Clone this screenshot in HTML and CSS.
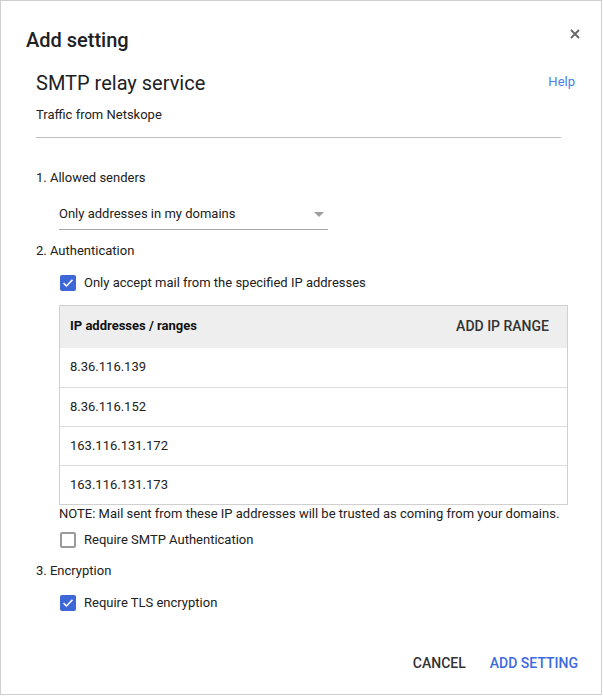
FILE: index.html
```html
<!DOCTYPE html>
<html>
<head>
<meta charset="utf-8">
<link rel="stylesheet" href="styles.css">
</head>
<body>
<div class="dialog">
  <div class="dlg-head">
    <h1 class="dlg-title">Add setting</h1>
    <span class="close" aria-label="Close">
      <svg width="10" height="10" viewBox="0 0 10 10"><path d="M1 1L9 9M9 1L1 9" stroke="#666" stroke-width="1.8" fill="none"/></svg>
    </span>
  </div>
  <div class="body">
    <div class="svc-row">
      <h2 class="svc-title">SMTP relay service</h2>
      <a class="help">Help</a>
    </div>
    <div class="desc-field">Traffic from Netskope</div>

    <div class="section-label first">1. Allowed senders</div>
    <div class="select">
      <span>Only addresses in my domains</span>
      <span class="caret"></span>
    </div>

    <div class="section-label auth">2. Authentication</div>
    <label class="check-row first-check">
      <span class="box checked"><svg width="12" height="10" viewBox="0 0 12 10"><path d="M1.5 5.2L4.5 8L10.5 1.8" stroke="#fff" stroke-width="1.6" fill="none"/></svg></span>
      <span>Only accept mail from the specified IP addresses</span>
    </label>

    <div class="ip-table">
      <div class="ip-head">
        <span class="ip-head-label">IP addresses / ranges</span>
        <span class="ip-add">ADD IP RANGE</span>
      </div>
      <div class="ip-row">8.36.116.139</div>
      <div class="ip-row">8.36.116.152</div>
      <div class="ip-row">163.116.131.172</div>
      <div class="ip-row">163.116.131.173</div>
    </div>
    <div class="note">NOTE: Mail sent from these IP addresses will be trusted as coming from your domains.</div>
    <label class="check-row smtp-check">
      <span class="box"></span>
      <span>Require SMTP Authentication</span>
    </label>

    <div class="section-label enc">3. Encryption</div>
    <label class="check-row tls-check">
      <span class="box checked"><svg width="12" height="10" viewBox="0 0 12 10"><path d="M1.5 5.2L4.5 8L10.5 1.8" stroke="#fff" stroke-width="1.6" fill="none"/></svg></span>
      <span>Require TLS encryption</span>
    </label>
  </div>
  <div class="footer">
    <button class="btn">CANCEL</button>
    <button class="btn primary">ADD SETTING</button>
  </div>
</div>
</body>
</html>
```
FILE: styles.css
```css
* { box-sizing: border-box; }
html, body { margin: 0; padding: 0; background: #fff; }
body {
  font-family: Roboto, "Liberation Sans", Arial, sans-serif;
  color: #212121;
  font-size: 13px;
}
.dialog {
  width: 602px;
  height: 695px;
  border: 1px solid #cfcfcf;
  display: flex;
  flex-direction: column;
  background: #fff;
}
.dlg-head {
  display: flex;
  justify-content: space-between;
  align-items: flex-start;
  padding: 27px 21px 0 25px;
}
.dlg-title {
  margin: 0;
  font-size: 20px;
  line-height: 24px;
  font-weight: 500;
  color: #202124;
}
.close {
  display: block;
  width: 10px;
  height: 10px;
  margin-top: 1px;
  line-height: 0;
}
.body {
  padding: 17px 26px 0 35px;
}
.svc-row {
  display: flex;
  justify-content: space-between;
  align-items: center;
  height: 28px;
}
.svc-title {
  margin: 0;
  font-size: 20px;
  line-height: 28px;
  font-weight: 400;
  color: #202124;
}
.help {
  color: #4a7fe6;
  font-size: 13px;
  line-height: 16px;
  margin-top: -2px;
}
.desc-field {
  margin-top: 10px;
  margin-right: 14px;
  line-height: 16px;
  padding-bottom: 14px;
  border-bottom: 1px solid #bdbdbd;
}
.section-label {
  line-height: 16px;
}
.section-label.first { margin-top: 32px; }
.section-label.auth { margin-top: 13px; }
.section-label.enc { margin-top: 14px; }
.select {
  margin: 20px 0 0 23px;
  width: 269px;
  display: flex;
  justify-content: space-between;
  align-items: center;
  line-height: 16px;
  padding-bottom: 7px;
  border-bottom: 1px solid #a8a8a8;
}
.caret {
  width: 0;
  height: 0;
  border-left: 5px solid transparent;
  border-right: 5px solid transparent;
  border-top: 5px solid #9e9e9e;
  margin-right: 4px;
}
.check-row {
  display: flex;
  align-items: center;
  margin-left: 24px;
  height: 18px;
  line-height: 16px;
}
.first-check { margin-top: 15px; }
.smtp-check { margin-top: 9px; }
.tls-check { margin-top: 15px; }
.box {
  width: 16px;
  height: 16px;
  border-radius: 2px;
  border: 2px solid #9a9a9a;
  margin-right: 8px;
  display: flex;
  align-items: center;
  justify-content: center;
  flex: none;
}
.box.checked {
  background: #3d66d6;
  border: none;
}
.ip-table {
  margin: 13px 7px 0 23px;
  border: 1px solid #d0d0d0;
}
.ip-head {
  height: 42px;
  background: #eeeeee;
  display: flex;
  justify-content: space-between;
  align-items: center;
  padding: 0 18px 3px 10px;
}
.ip-head-label {
  font-weight: 700;
  color: #111;
}
.ip-add {
  font-size: 14px;
  font-weight: 500;
  color: #333;
}
.ip-row {
  height: 39px;
  line-height: 38px;
  padding-left: 10px;
  border-top: 1px solid #dcdcdc;
  color: #222;
}
.ip-row:nth-child(2) { border-top: none; }
.note {
  margin: 1px 0 0 23px;
  line-height: 16px;
  white-space: nowrap;
}
.footer {
  margin-top: auto;
  display: flex;
  justify-content: flex-end;
  padding: 0 15px 13px 0;
  gap: 8px;
}
.btn {
  background: none;
  border: none;
  font-family: inherit;
  font-size: 14px;
  font-weight: 500;
  line-height: 36px;
  height: 36px;
  padding: 0 8px;
  color: #333;
  letter-spacing: 0;
}
.btn.primary { color: #3d6ae0; }
```
